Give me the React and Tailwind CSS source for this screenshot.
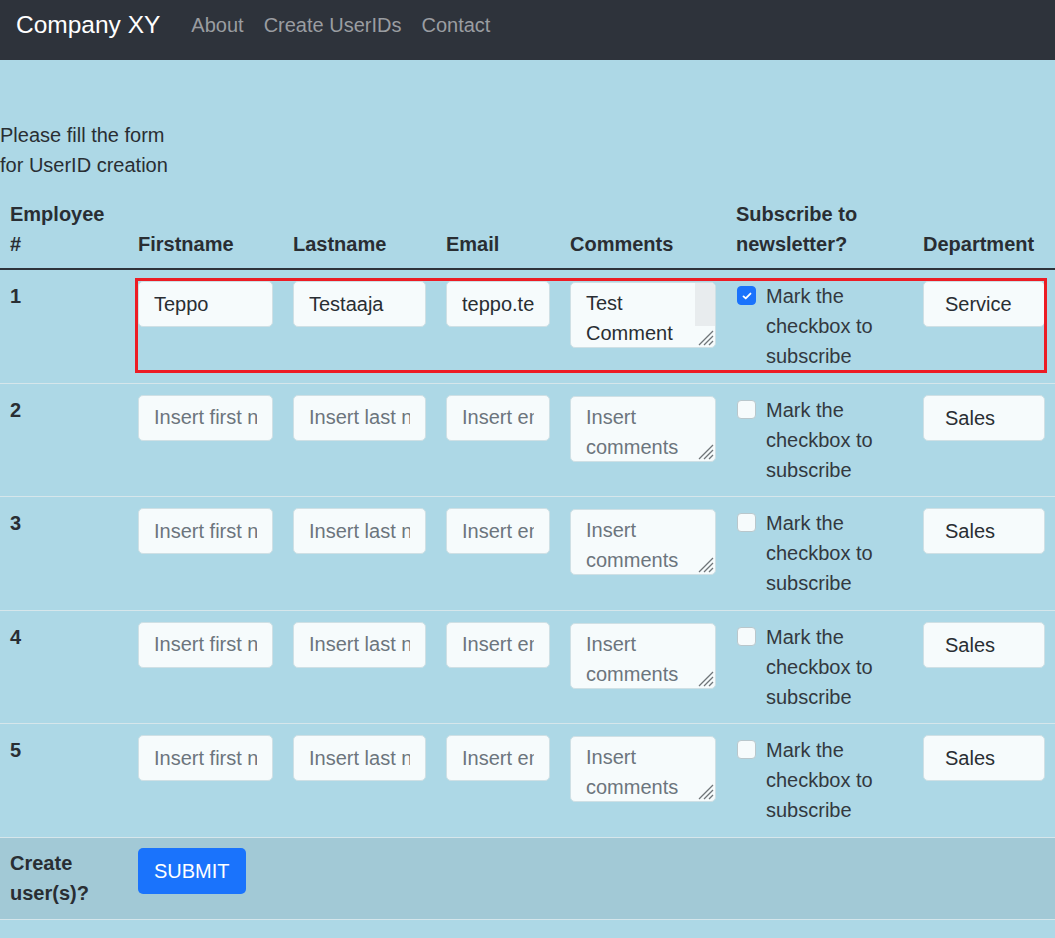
import React from 'react';

const rows = [
  { id: 1, first: 'Teppo', last: 'Testaaja', email: 'teppo.testaaja@example.com', comment: 'Test\nComment', subscribed: true, dept: 'Service' },
  { id: 2, first: '', last: '', email: '', comment: '', subscribed: false, dept: 'Sales' },
  { id: 3, first: '', last: '', email: '', comment: '', subscribed: false, dept: 'Sales' },
  { id: 4, first: '', last: '', email: '', comment: '', subscribed: false, dept: 'Sales' },
  { id: 5, first: '', last: '', email: '', comment: '', subscribed: false, dept: 'Sales' },
];

const inputCls =
  'block w-full h-[46px] px-[15px] py-[7px] text-[20px] leading-[30px] text-[#292e33] bg-[#f6fbfc] border border-[#cfe0e5] rounded-[5px] placeholder:text-[#6c757d] outline-none';

function Checkbox({ checked }) {
  return (
    <span
      className={`absolute left-[1px] top-[5px] w-[19px] h-[19px] rounded-[4px] flex items-center justify-center ${
        checked ? 'bg-[#1a73fc] border border-[#1a73fc]' : 'bg-[#f6fbfc] border border-[#b9c7cc]'
      }`}
    >
      {checked && (
        <svg viewBox="0 0 20 20" className="w-[14px] h-[14px]" fill="none">
          <path d="M5 10.5l3.2 3L15 6.5" stroke="white" strokeWidth="2.6" strokeLinecap="round" strokeLinejoin="round" />
        </svg>
      )}
    </span>
  );
}

function CommentBox({ value, scroll }) {
  return (
    <div className="relative">
      <textarea
        className="block w-full h-[66px] px-[15px] py-[5px] text-[20px] leading-[30px] text-[#292e33] bg-[#f6fbfc] border border-[#cfe0e5] rounded-[5px] placeholder:text-[#6c757d] outline-none resize-none overflow-hidden"
        defaultValue={value}
        placeholder="Insert comments"
      />
      {scroll && <div className="absolute right-[1px] top-[1px] w-[20px] h-[43px] bg-[#e8ecee] rounded-tr-[4px]" />}
      <svg className="absolute right-[2px] bottom-[2px] w-[18px] h-[18px]" viewBox="0 0 18 18" fill="none">
        <path d="M17 3L3 17M17 8L8 17M17 13l-4 4" stroke="#6f7579" strokeWidth="1.3" />
      </svg>
    </div>
  );
}

export default function App() {
  return (
    <div className="min-h-screen w-[1055px] overflow-hidden bg-[#add8e6] text-[#292e33] font-['Liberation_Sans',Arial,sans-serif] text-[20px] leading-[30px]">
      {/* Navbar */}
      <nav className="h-[60px] bg-[#2e333b] flex items-start pt-[10px] pl-[16px]">
        <span className="text-[24.5px] leading-[30px] text-white mr-[31px]">Company XY</span>
        <div className="flex gap-[20px] text-[#9a9da1]">
          <span>About</span>
          <span>Create UserIDs</span>
          <span>Contact</span>
        </div>
      </nav>

      <div className="relative pt-[60px]">
        <p className="w-[175px]">Please fill the form for UserID creation</p>

        <table className="mt-[9px] w-[1055px] table-fixed border-collapse">
          <colgroup>
            <col className="w-[128px]" />
            <col className="w-[155px]" />
            <col className="w-[153px]" />
            <col className="w-[124px]" />
            <col className="w-[166px]" />
            <col className="w-[187px]" />
            <col className="w-[142px]" />
          </colgroup>
          <thead>
            <tr className="border-b-2 border-[#2e333b]">
              {['Employee #', 'Firstname', 'Lastname', 'Email', 'Comments', 'Subscribe to newsletter?', 'Department'].map((h) => (
                <th key={h} className="px-[10px] pt-[10px] pb-[9px] text-left align-bottom font-bold">
                  {h}
                </th>
              ))}
            </tr>
          </thead>
          <tbody>
            {rows.map((r) => (
              <tr key={r.id} className="border-b border-[#d6e6eb]">
                <td className="px-[10px] pt-[11px] pb-[11.5px] align-top font-bold">{r.id}</td>
                <td className="px-[10px] pt-[11px] pb-[11.5px] align-top">
                  <input className={inputCls} defaultValue={r.first} placeholder="Insert first name" />
                </td>
                <td className="px-[10px] pt-[11px] pb-[11.5px] align-top">
                  <input className={inputCls} defaultValue={r.last} placeholder="Insert last name" />
                </td>
                <td className="px-[10px] pt-[11px] pb-[11.5px] align-top">
                  <input className={inputCls} defaultValue={r.email} placeholder="Insert email" />
                </td>
                <td className="px-[10px] pt-[12px] pb-[11.5px] align-top">
                  <CommentBox value={r.comment} scroll={r.comment !== ''} />
                </td>
                <td className="px-[10px] pt-[11px] pb-[11.5px] align-top">
                  <label className="relative block pl-[30px] text-[#33393f]">
                    <Checkbox checked={r.subscribed} />
                    Mark the checkbox to subscribe
                  </label>
                </td>
                <td className="px-[10px] pt-[11px] pb-[11.5px] align-top">
                  <select
                    className="block w-full h-[46px] pl-[21px] pr-[10px] text-[20px] leading-[30px] text-[#292e33] bg-[#f6fbfc] border border-[#cfe0e5] rounded-[5px] appearance-none outline-none"
                    defaultValue={r.dept}
                  >
                    <option>Sales</option>
                    <option>Service</option>
                    <option>Marketing</option>
                  </select>
                </td>
              </tr>
            ))}
            <tr className="bg-[#a2c9d6] border-b border-[#d6e6eb]">
              <td className="px-[10px] pt-[10px] pb-[11px] align-top font-bold">Create user(s)?</td>
              <td className="px-[10px] pt-[10px] pb-[11px] align-top" colSpan={6}>
                <button className="h-[46px] px-[16px] rounded-[5px] bg-[#1a73fc] text-white text-[20px] leading-[30px]">
                  SUBMIT
                </button>
              </td>
            </tr>
          </tbody>
        </table>

        {/* Highlight around first row */}
        <div className="absolute left-[135px] top-[218px] w-[912px] h-[95px] border-[3px] border-[#ec1c24] pointer-events-none" />
      </div>
    </div>
  );
}
